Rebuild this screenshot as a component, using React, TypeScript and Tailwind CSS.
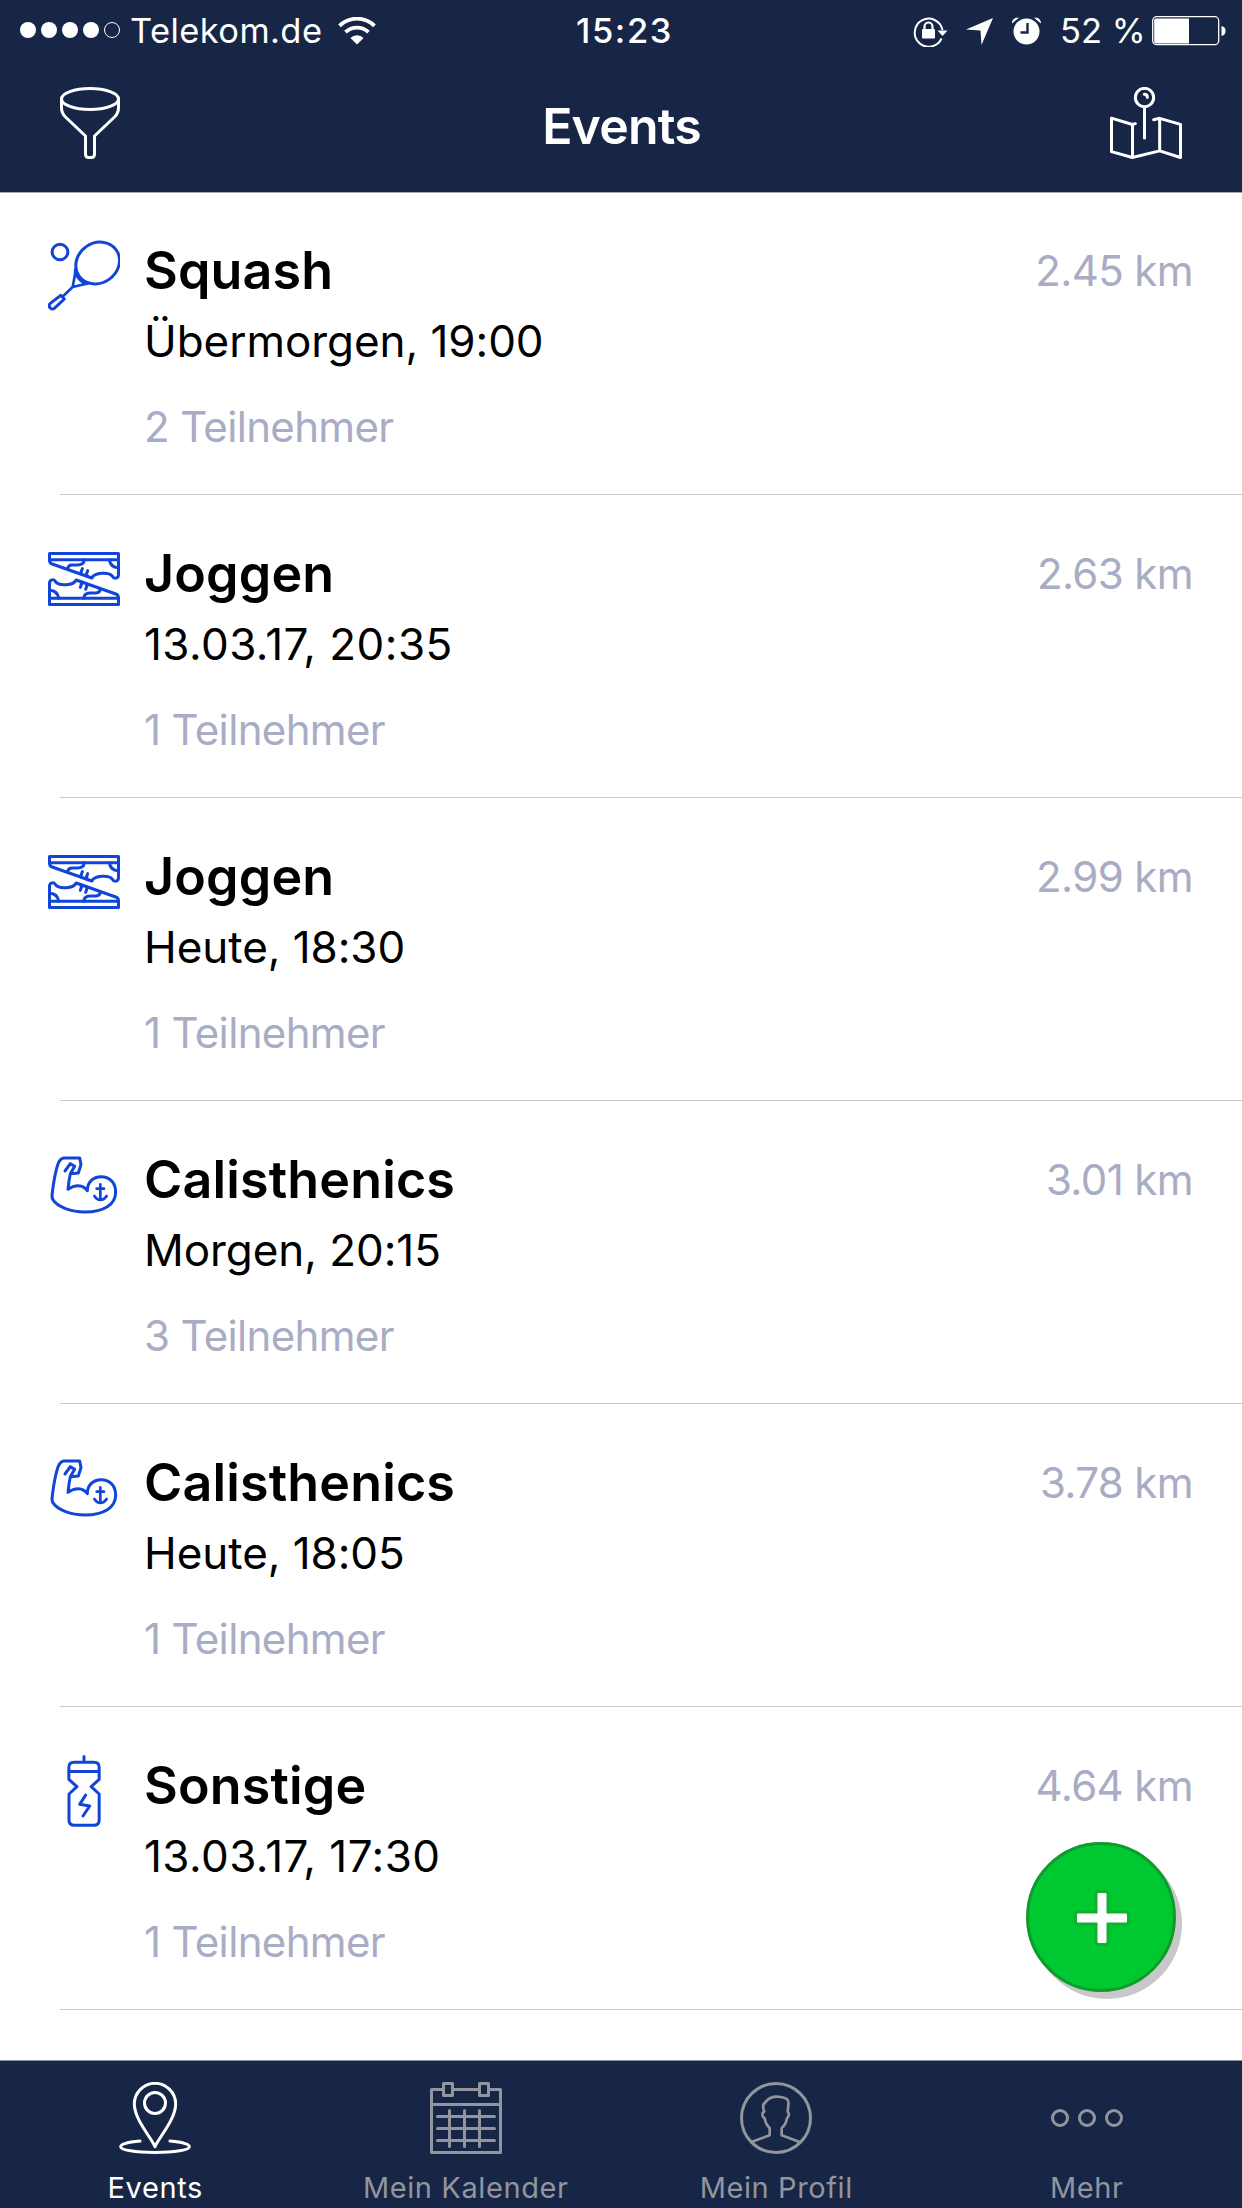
import type { ReactNode } from "react";

type Sport = "squash" | "joggen" | "calisthenics" | "sonstige";

const events: { sport: Sport; title: string; date: string; people: string; distance: string }[] = [
    { sport: "squash", title: "Squash", date: "Übermorgen, 19:00", people: "2 Teilnehmer", distance: "2.45 km" },
    { sport: "joggen", title: "Joggen", date: "13.03.17, 20:35", people: "1 Teilnehmer", distance: "2.63 km" },
    { sport: "joggen", title: "Joggen", date: "Heute, 18:30", people: "1 Teilnehmer", distance: "2.99 km" },
    { sport: "calisthenics", title: "Calisthenics", date: "Morgen, 20:15", people: "3 Teilnehmer", distance: "3.01 km" },
    { sport: "calisthenics", title: "Calisthenics", date: "Heute, 18:05", people: "1 Teilnehmer", distance: "3.78 km" },
    { sport: "sonstige", title: "Sonstige", date: "13.03.17, 17:30", people: "1 Teilnehmer", distance: "4.64 km" },
];

// All line icons share a 216 unit box, drawn at 72px
function LineIcon({ children, className = "" }: { children: ReactNode; className?: string }) {
    return (
        <svg
            viewBox="0 0 216 216"
            className={`size-[72px] shrink-0 ${className}`}
            fill="none"
            stroke="currentColor"
            strokeWidth="9"
            strokeLinecap="round"
            strokeLinejoin="round"
        >
            {children}
        </svg>
    );
}

const Shoe = () => (
    <>
        <path d="M4.500 166h207v18.500H4.500z" />
        <path d="M4.500 166v-45c0-12 14-14 18-5 10 14 54 12 62-5l119 42c6 2 8 5 8 13" />
        <path d="M5 142c16 1 25 10 27 24M108 166c-1-12 8-16 20-16h16c9 0 12-5 13-11" />
        <path d="M97 133l5-13M113 139l5-13M99 116c2 4 1 8 0 12M115 122c2 4 2 8 0 12" />
    </>
);

const sportIcons: Record<Sport, ReactNode> = {
    squash: (
        <>
            <circle cx="36" cy="36" r="23.500" />
            <ellipse cx="149" cy="69" rx="68" ry="60" transform="rotate(-35 149 69)" />
            <path d="M82 88c0 20-5 34-8 53l51-12M83 96c4 18 14 30 32 36M74 141l-29 28" strokeWidth="8" />
            <path d="M38 166l11 11-30 28c-8 6-20-4-13-14z" />
        </>
    ),
    joggen: (
        <>
            <Shoe />
            <g transform="rotate(180 108 108)">
                <Shoe />
            </g>
        </>
    ),
    calisthenics: (
        <>
            <path d="M51 66l16-22 13 8-13 22-4 22-3 25c20-14 44-16 58 4 0-24 16-42 42-42 26 0 43 20 43 46 0 38-36 60-92 60-40 0-83-14-97-38-4-8-1-18 0-28 5-38 11-64 16-78 4-10 9-17 17-18h48l4 20-8 25-23 2" />
            <path d="M157 106v46M146 119h22M139 141c6 9 12 12 18 12s13-3 19-12" strokeWidth="8" />
        </>
    ),
    sonstige: (
        <>
            <path d="M108 4.500v17M62.500 50V37c0-10 6-15 15-15h61c9 0 15 5 15 15v36l-24 22 24 22v78c0 10-6 16-16 16H79c-10 0-16-6-16-16v-78l24-22-24.500-22zM63 49.500h90" />
            <path d="M113 120l-18 28 30 5-20 30" />
        </>
    ),
};

function StatusBar() {
    return (
        <div className="flex h-[62px] items-center pl-[19px] pr-[16px] text-[34.5px] leading-none">
            <div className="flex w-[557px] items-center">
                <svg viewBox="0 0 102 18" className="h-[18px] w-[102px]" fill="currentColor">
                    <circle cx="9" cy="8" r="8" />
                    <circle cx="30" cy="8" r="8" />
                    <circle cx="51" cy="8" r="8" />
                    <circle cx="72" cy="8" r="8" />
                    <circle cx="93" cy="8" r="7.500" fill="none" stroke="currentColor" />
                </svg>
                <span className="ml-[9px] w-[197px] whitespace-nowrap pt-px tracking-[0.4px]">Telekom.de</span>
                <svg viewBox="0 0 38 28" className="ml-[11px] h-[28px] w-[38px]" fill="none" stroke="currentColor" strokeWidth="3.800">
                    <path d="M1.500 8.800a25 25 0 0 1 35 0M7.500 15.200a16.500 16.500 0 0 1 23 0" />
                    <path d="M19 27.500l-6.600-6.600a9.500 9.500 0 0 1 13.200 0z" fill="currentColor" stroke="none" />
                </svg>
            </div>
            <span className="pt-px font-medium tracking-[1.6px]">15:23</span>
            <div className="flex flex-1 items-center justify-end">
                <svg viewBox="0 0 36 32" className="h-[32px] w-[36px]" fill="none" stroke="currentColor" strokeWidth="2">
                    <path d="M28.500 23.500A14 14 0 1 1 29.500 15" />
                    <path d="M24.500 15.500h10L29.500 21z" fill="currentColor" stroke="none" />
                    <path d="M11.500 15v-3.500a4 4 0 0 1 8 0V15" strokeWidth="2.200" />
                    <rect x="9" y="14" width="13" height="9.500" rx="1" fill="currentColor" stroke="none" />
                </svg>
                <svg viewBox="0 0 27 27" className="ml-[17px] size-[27px]" fill="currentColor">
                    <path d="M27 0L15.500 27 14.500 12.500 0 11.500z" />
                </svg>
                <svg viewBox="0 0 29 28" className="ml-[19px] h-[28px] w-[29px]" fill="currentColor">
                    <circle cx="14.500" cy="14.500" r="13" />
                    <path d="M0 6.500C0 2 3 .3 7 .8zM29 6.500C29 2 26 .3 22 .8z" />
                    <path d="M15.500 6v9.500H8.500" fill="none" stroke="#172646" strokeWidth="2.400" />
                </svg>
                <span className="ml-[19px] w-[85px] whitespace-nowrap pt-px">52 %</span>
                <svg viewBox="0 0 74 30" className="ml-[7px] h-[30px] w-[74px]" fill="currentColor">
                    <rect x=".7" y=".7" width="66" height="28" rx="4" fill="none" stroke="currentColor" strokeWidth="1.300" />
                    <path d="M4 2.500h33v25H4c-1.200 0-1.800-.8-1.800-1.800V4.300c0-1 .6-1.800 1.800-1.800z" />
                    <path d="M69.500 10c3 .6 4 2.500 4 5s-1 4.400-4 5z" />
                </svg>
            </div>
        </div>
    );
}

function Header() {
    return (
        <header className="relative h-48 shrink-0 bg-[#172646] text-white shadow-[0_1px_0_#a9a9ad]">
            <StatusBar />
            <div className="flex items-start justify-between pl-[54px] pr-[60px] pt-[25px]">
                <LineIcon>
                    <ellipse cx="108" cy="36" rx="85.500" ry="31.500" />
                    <path d="M22.500 36v26c0 12 4 20 12 28l60 57v54c0 7 3 10.500 9 10.500h9c6 0 9-3.500 9-10.500v-54l60-57c8-8 12-16 12-28V36" />
                </LineIcon>
                <h1 className="ml-[7px] mt-[3px] text-[50px] font-semibold leading-[72px] tracking-[-0.8px]">Events</h1>
                <LineIcon>
                    <circle cx="103.500" cy="31.500" r="27.500" />
                    <path d="M103 22c6 0 9 4 9 9" />
                    <path d="M103.500 60v93M76 110l-9 2.500-62.500-19V194L67 211.500l82-20 62.500 20V112L149 94l-18 4M67.500 113v98M149 94v97" />
                </LineIcon>
            </div>
        </header>
    );
}

function EventRow({ event }: { event: (typeof events)[number] }) {
    // Numeric dates are set a little wider than the written ones
    const dateTracking = /^\d/.test(event.date) ? "tracking-[0.45px]" : "tracking-[-0.05px]";

    return (
        <li className="flex h-[303px] pl-[48px]">
            <LineIcon className="mt-[48px] text-[#1145d8]">{sportIcons[event.sport]}</LineIcon>
            <div className="ml-[-60px] flex flex-1 border-b border-[#c8c7cc] pl-[84px] pr-[49px]">
                <div className="flex-1 pt-[49px]">
                    <h2 className="text-[52px] font-semibold leading-[60px] tracking-[0.15px]">{event.title}</h2>
                    <p className={`mt-[12px] text-[44px] leading-[56px] ${dateTracking}`}>{event.date}</p>
                    <p className="mt-[32px] text-[42px] leading-[52px] tracking-[-0.65px] text-[#a8acc4]">{event.people}</p>
                </div>
                <span className="mt-[53px] text-[42px] leading-[52px] tracking-[-0.6px] text-[#a8acc4]">{event.distance}</span>
            </div>
        </li>
    );
}

function Tab({ label, active = false, children }: { label: string; active?: boolean; children: ReactNode }) {
    return (
        <div className={`flex flex-1 flex-col items-center pt-[21px] ${active ? "text-white" : "text-[#92959d]"}`}>
            <LineIcon>{children}</LineIcon>
            <span className="mt-[16px] whitespace-nowrap text-[29px] leading-[36px] tracking-[0.6px]">{label}</span>
        </div>
    );
}

function TabBar() {
    return (
        <nav className="flex h-[148px] shrink-0 border-t border-[#8b93a0] bg-[#172646]">
            <Tab label="Events" active>
                <path d="M108 194C96 166 46 112 46 66a62 62 0 0 1 124 0c0 46-50 100-62 128z" />
                <circle cx="108" cy="63" r="31.500" />
                <path d="M63 177c-36 3-58 9-58 17 0 10 44 17.500 103 17.500S211 204 211 194c0-8-22-14-58-17" />
            </Tab>
            <Tab label="Mein Kalender">
                <path d="M36 22.500H4.500v189h207v-189H180M72 22.500h72M4.500 67.500h207" />
                <path d="M40.500 4.500h27v36h-27zM148.500 4.500h27v36h-27z" />
                <path d="M22.500 103.500h171M22.500 139.500h171M22.500 175.500h171M58.500 85.500v108M103.500 85.500v108M148.500 85.500v108" />
            </Tab>
            <Tab label="Mein Profil">
                <circle cx="108" cy="108" r="103.500" />
                <path d="M34 180l55-20v-22c-10-8-13-18-15-29-7-4-8-12-5-18l4-2c-5-12-4-24 4-29 10-14 25-18 45-15 18 2 26 8 23 24l-2 20c5 4 5 13-2 20-2 11-6 22-16 29v22l54 20" strokeWidth="8" />
            </Tab>
            <Tab label="Mehr">
                <circle cx="27" cy="108" r="22.500" />
                <circle cx="108" cy="108" r="22.500" />
                <circle cx="189" cy="108" r="22.500" />
            </Tab>
        </nav>
    );
}

export default function App() {
    return (
        <div className="relative flex h-[2208px] w-[1242px] flex-col overflow-hidden bg-white font-['Inter',sans-serif] text-black">
            <Header />
            <ul className="flex-1">
                {events.map((event, i) => (
                    <EventRow key={i} event={event} />
                ))}
            </ul>
            <TabBar />

            {/* Floating add button */}
            <button className="absolute bottom-[216px] right-[66px] flex size-[150px] items-center justify-center rounded-full border-[3px] border-[#109a2c] bg-[#00c830] shadow-[6px_7px_0_#c8c8c8]">
                <svg viewBox="0 0 60 60" className="ml-px mt-px size-[60px]" strokeLinejoin="round">
                    <path
                        d="M26.500 6h7v20.500H54v7H33.500V54h-7V33.500H6v-7h20.500z"
                        fill="#fff"
                        stroke="#10b030"
                        strokeWidth="8"
                    />
                    <path d="M26.500 6h7v20.500H54v7H33.500V54h-7V33.500H6v-7h20.500z" fill="#fff" stroke="#fff" strokeWidth="2" />
                </svg>
            </button>
        </div>
    );
}
